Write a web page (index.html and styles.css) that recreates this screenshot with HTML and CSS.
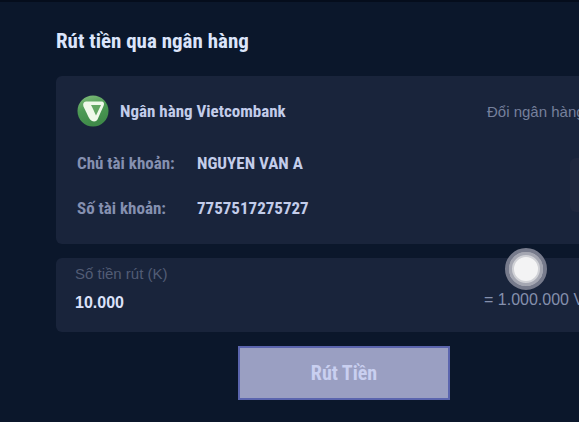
FILE: index.html
```html
<!DOCTYPE html>
<html lang="vi">
<head>
  <meta charset="UTF-8">
  <meta name="viewport" content="width=device-width, initial-scale=1.0">
  <title>Rút tiền qua ngân hàng</title>
  <link rel="stylesheet" href="styles.css">
</head>
<body>
  <main class="withdraw">
    <h1>Rút tiền qua ngân hàng</h1>

    <form>
      <section class="card bank">
        <div class="bank-header">
          <svg class="bank-logo" viewBox="0 0 32 32" aria-hidden="true">
            <defs>
              <linearGradient id="green" x1="0" y1="0" x2="0.3" y2="1">
                <stop offset="0" stop-color="#86c07f"/>
                <stop offset="0.5" stop-color="#4c9a54"/>
                <stop offset="1" stop-color="#3f8a49"/>
              </linearGradient>
            </defs>
            <circle cx="16" cy="16" r="15.5" fill="url(#green)"/>
            <path d="M9 6.500 H24 C27 6.500 27.500 8.500 26.500 11 L20.500 24.500 C19.500 26.500 17 27 15 26 C13.500 25.200 12.500 24 11.500 22 L6.500 11.500 C5.500 9 6.500 6.800 9 6.500Z" fill="#f0f9ea"/>
            <path d="M14 10 H24 L19 20.500 C17.500 17.500 15.500 12.500 14 10Z" fill="#64a764"/>
          </svg>
          <span class="bank-name">Ngân hàng Vietcombank</span>
          <a class="side" href="#">Đổi ngân hàng</a>
        </div>

        <dl class="account">
          <dt>Chủ tài khoản:</dt>
          <dd>NGUYEN VAN A</dd>
          <dt>Số tài khoản:</dt>
          <dd>7757517275727</dd>
        </dl>
        <span class="side-tab"></span>
      </section>

      <section class="card amount">
        <label for="so-tien">Số tiền rút (K)</label>
        <div class="amount-row">
          <input type="text" id="so-tien" name="so-tien" value="10.000">
          <span class="side converted">= 1.000.000 VND</span>
        </div>
        <span class="touch"></span>
      </section>

      <button type="button">Rút Tiền</button>
    </form>
  </main>
</body>
</html>
```

FILE: styles.css
```css
* {
  box-sizing: border-box;
  margin: 0;
  padding: 0;
}

body {
  font-family: "Liberation Sans", Arial, sans-serif;
  background: #0b172b;
  color: #c3cdea;
  min-height: 100vh;
  overflow-x: hidden;
  border-top: 2px solid #050d1c;
}

.withdraw {
  padding: 24px 0 20px 56px;
}

h1,
.bank-name,
.account,
button {
  font-family: "Roboto Condensed", "Liberation Sans Narrow", "Open Sans Condensed", "Liberation Sans", sans-serif;
  font-weight: bold;
}

h1 {
  font-size: 21px;
  line-height: 30px;
  margin-bottom: 20px;
  color: #dbe5fb;
}

/* Cards */
.card {
  position: relative;
  background: #19243b;
  border-radius: 6px 0 0 6px;
  margin-bottom: 14px;
  white-space: nowrap;
}

.bank {
  padding: 19px 0 13px 21px;
}

.bank-header {
  display: flex;
  align-items: center;
}

.bank-logo {
  width: 32px;
  height: 32px;
  margin-right: 11px;
}

.bank-name {
  font-size: 17px;
}

/* Right column, runs on past the edge of the screen */
.side {
  width: 92px;
  margin-left: auto;
  font-size: 15px;
  color: #76809c;
  text-decoration: none;
}

.account {
  display: grid;
  grid-template-columns: 120px 1fr;
  font-size: 17px;
  line-height: 45px;
  margin-top: 14px;
}

.account dt {
  color: #8590b0;
}

.side-tab {
  position: absolute;
  right: 0;
  top: 82px;
  width: 9px;
  height: 54px;
  border-radius: 6px 0 0 6px;
  background: #20283e;
}

/* Amount */
.amount {
  padding: 6px 0 10px 19px;
}

.amount label {
  display: block;
  font-size: 15px;
  line-height: 20px;
  color: #525c75;
}

.amount-row {
  display: flex;
  height: 38px;
}

.amount input {
  width: 200px;
  border: none;
  background: none;
  font: bold 16px "Liberation Sans", Arial, sans-serif;
  color: #dbe2fa;
}

.converted {
  width: 95px;
  font-size: 16px;
  line-height: 32px;
  color: #8590ad;
}

/* Finger position */
.touch {
  position: absolute;
  right: 32px;
  top: -10px;
  width: 42px;
  height: 42px;
  border-radius: 50%;
  border: 4px solid #777b8c;
  background: #f3f3f4;
  box-shadow: inset 0 0 0 3px #a5a7b2, inset 0 0 0 5px #d0d1d6;
}

button {
  display: block;
  width: 212px;
  height: 54px;
  margin-left: 182px;
  border: 2px solid #5b65ae;
  background: #9a9fc2;
  color: #c9cff0;
  font-size: 20px;
}
```
